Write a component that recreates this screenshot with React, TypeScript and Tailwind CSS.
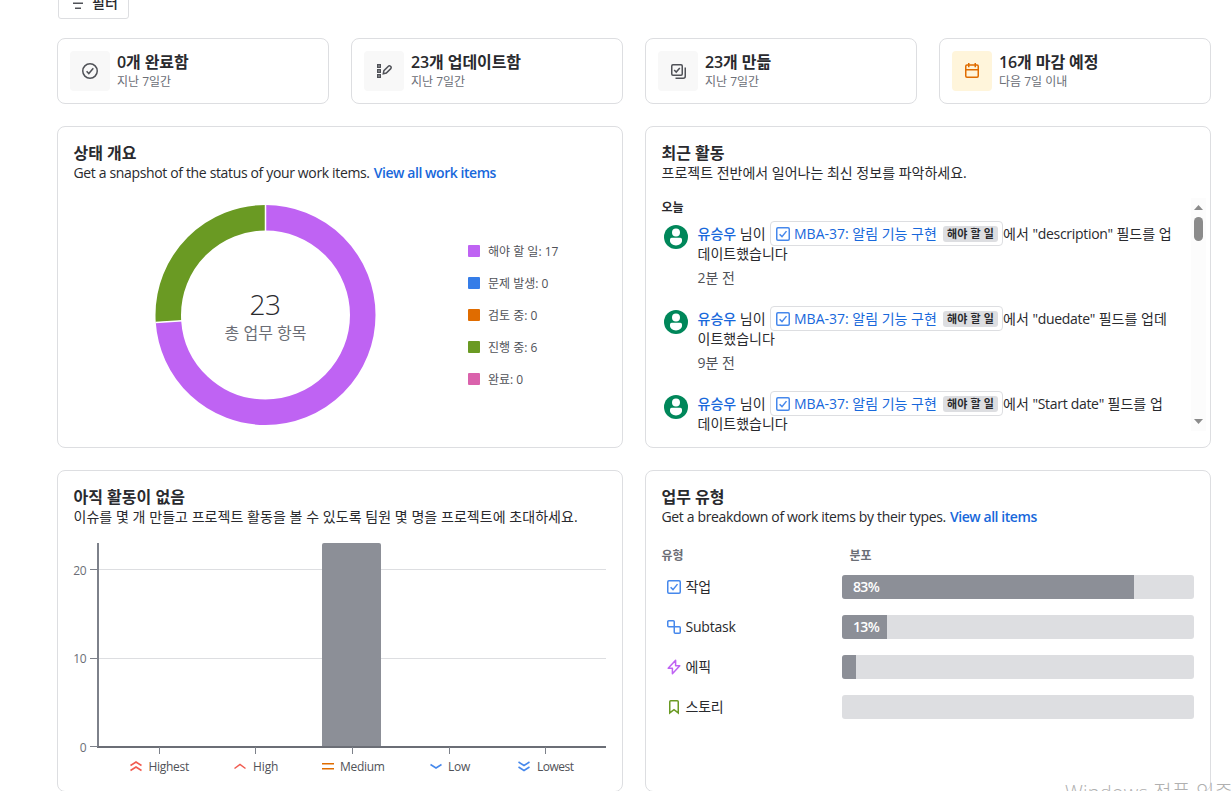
import type { ReactNode } from "react"
import clsx from "clsx"

interface StatCardProps {
  title: string
  caption: string
  icon: ReactNode
  highlight?: boolean
}

interface Activity {
  field: string
  before: string
  after: string
  time: string
}

interface WorkType {
  name: string
  percent: number
  icon: ReactNode
}

const TRACK_WIDTH = 352

const legend = [
  { label: "해야 할 일: 17", color: "bg-[#bf63f3]" },
  { label: "문제 발생: 0", color: "bg-[#357de8]" },
  { label: "검토 중: 0", color: "bg-[#e06c00]" },
  { label: "진행 중: 6", color: "bg-[#6a9a23]" },
  { label: "완료: 0", color: "bg-[#da62ac]" },
]

const activities: Activity[] = [
  { field: "description", before: "필드를 업", after: "데이트했습니다", time: "2분 전" },
  { field: "duedate", before: "필드를 업데", after: "이트했습니다", time: "9분 전" },
  { field: "Start date", before: "필드를 업", after: "데이트했습니다", time: "" },
]

const workTypes: WorkType[] = [
  { name: "작업", percent: 83, icon: <TaskIcon /> },
  { name: "Subtask", percent: 13, icon: <SubtaskIcon /> },
  { name: "에픽", percent: 4, icon: <EpicIcon /> },
  { name: "스토리", percent: 0, icon: <StoryIcon /> },
]

function TaskIcon() {
  return (
    <svg width="16" height="16" viewBox="0 0 16 16" fill="none" stroke="#4688ec" strokeWidth="1.5" className="shrink-0">
      <rect x="1.75" y="1.75" width="12.5" height="12.5" rx="1.2" />
      <path d="M4.6 8.2 7 10.6l4.5-5.5" />
    </svg>
  )
}

function SubtaskIcon() {
  return (
    <svg width="16" height="16" viewBox="0 0 16 16" fill="none" stroke="#4688ec" strokeWidth="1.5" className="shrink-0">
      <path d="M8.25 7.75v-5a1 1 0 0 0-1-1h-4.5a1 1 0 0 0-1 1v4a1 1 0 0 0 1 1h10.5a1 1 0 0 1 1 1v4.5a1 1 0 0 1-1 1h-4a1 1 0 0 1-1-1v-5.5" />
    </svg>
  )
}

function EpicIcon() {
  return (
    <svg width="16" height="16" viewBox="0 0 16 16" fill="none" stroke="#bf63f3" strokeWidth="1.5" strokeLinejoin="round" className="shrink-0">
      <path d="M9.6 1.2 2.2 9.2h4.2v5.6l7.400-8H9.6z" />
    </svg>
  )
}

function StoryIcon() {
  return (
    <svg width="16" height="16" viewBox="0 0 16 16" fill="none" stroke="#6a9a23" strokeWidth="1.5" className="shrink-0">
      <path d="M3.75 2.75a1 1 0 0 1 1-1h6.5a1 1 0 0 1 1 1v11.2L8 10.6l-4.25 3.35z" />
    </svg>
  )
}

function DoneIcon() {
  return (
    <svg width="16" height="16" viewBox="0 0 16 16" fill="none" stroke="#505258" strokeWidth="1.5">
      <circle cx="8" cy="8" r="7.25" />
      <path d="m4.6 8.3 2.2 2.3 4.5-5.3" />
    </svg>
  )
}

function UpdatedIcon() {
  return (
    <svg width="16" height="16" viewBox="0 0 16 16" fill="none" stroke="#505258" strokeWidth="1.5">
      <rect x="1.75" y="1.75" width="2.5" height="2.5" />
      <rect x="1.75" y="6.75" width="2.5" height="2.5" />
      <rect x="1.75" y="11.75" width="2.5" height="2.5" />
      <path d="M7.300 10.700l.6-3 4.500-4.500a1.400 1.400 0 0 1 2 0l.4.4a1.400 1.400 0 0 1 0 2L10.300 10.100z" />
    </svg>
  )
}

function CreatedIcon() {
  return (
    <svg width="16" height="16" viewBox="0 0 16 16" fill="none" stroke="#505258" strokeWidth="1.5">
      <rect x="1.75" y="1.75" width="10.5" height="10.5" rx="1.2" />
      <path d="m4.200 7 2 2.100 3.600-4.200" />
      <path d="M15.250 4.500v8.750a2 2 0 0 1-2 2H5.500" />
    </svg>
  )
}

function DueIcon() {
  return (
    <svg width="16" height="16" viewBox="0 0 16 16" fill="none" stroke="#e06c00" strokeWidth="1.5">
      <rect x="1.75" y="2" width="12.5" height="12.25" rx="1.2" />
      <path d="M1.75 6.75h12.5M4.75 0v4.2M11.25 0v4.2" />
    </svg>
  )
}

function StatCard({ title, caption, icon, highlight }: StatCardProps) {
  return (
    <div className="flex h-[66px] items-center rounded-lg border border-[#dddee1] px-3">
      <div className={clsx("flex size-10 items-center justify-center rounded", highlight ? "bg-[#fff5db]" : "bg-[#f8f8f8]")}>
        {icon}
      </div>
      <div className="ml-[7px] pt-px">
        <div className="text-base leading-5 font-semibold tracking-[-0.1px] whitespace-nowrap">{title}</div>
        <div className="text-xs leading-5 whitespace-nowrap text-[#6b6e76]">{caption}</div>
      </div>
    </div>
  )
}

function Panel({ title, description, link, children }: { title: string; description: ReactNode; link?: string; children: ReactNode }) {
  return (
    <section className="flex h-[322px] flex-col rounded-lg border border-[#dddee1] px-[15px] pt-4">
      <h2 className="pl-[0.5px] text-base leading-5 font-semibold">{title}</h2>
      <p className="pl-[0.5px] text-sm leading-5 whitespace-nowrap">
        {description}
        {link && <a className="ml-1 font-semibold tracking-[-0.44px] text-[#1868db]">{link}</a>}
      </p>
      {children}
    </section>
  )
}

function StatusChart() {
  return (
    <div className="flex">
      <svg width="221" height="220" viewBox="0 0 221 220" className="mt-[22px] ml-[82px]">
        <g transform="translate(0.5 0)">
          <g fill="none" strokeWidth="25.5" transform="rotate(-90 110 110)">
            <circle cx="110" cy="110" r="97.25" stroke="#bf63f3" pathLength="23" strokeDasharray="17 6" />
            <circle cx="110" cy="110" r="97.25" stroke="#6a9a23" pathLength="23" strokeDasharray="6 17" strokeDashoffset="-17" />
          </g>
          <path d="M110 0v27M0 117.500l27-1.800" stroke="#fff" strokeWidth="1.5" />
          <text x="109.500" y="110" textAnchor="middle" fontSize="28" fontWeight="300" fill="#292a2e" letterSpacing="-0.6">23</text>
          <text x="110" y="134" textAnchor="middle" fontSize="16" fill="#6b6e76">총 업무 항목</text>
        </g>
      </svg>
      <ul className="mt-[58px] ml-[92px]">
        {legend.map((item) => (
          <li key={item.label} className="flex h-8 items-start gap-2">
            <span className={clsx("mt-1 size-3 rounded-[1px]", item.color)} />
            <span className="mt-px text-xs leading-5 text-[#505258]">{item.label}</span>
          </li>
        ))}
      </ul>
    </div>
  )
}

function ActivityItem({ activity }: { activity: Activity }) {
  return (
    <div className="flex h-[85px] shrink-0">
      <svg width="24" height="24" viewBox="0 0 24 24" className="mt-[7px] ml-[3px] shrink-0">
        <circle cx="12" cy="12" r="12" fill="#00875a" />
        <circle cx="12" cy="7.5" r="4" fill="#fff" />
        <path d="M6 14.5A1.7 1.7 0 0 1 7.700 12.800h8.600a1.700 1.700 0 0 1 1.700 1.700v1.300c0 2.600-2.600 4.600-6 4.600s-6-2-6-4.600z" fill="#fff" />
      </svg>
      <div className="ml-[9px] text-sm leading-5 whitespace-nowrap">
        <div className="mt-1.5 flex h-5 items-center">
          <span className="w-[73px] pl-[0.5px]">
            <span className="font-medium text-[#1868db]">유승우</span> 님이
          </span>
          <span className="-mt-px flex h-[25px] w-[233px] items-center rounded border border-[#dddee1] pl-1 text-[#1868db]">
            <TaskIcon />
            <span className="ml-[3px] w-[149px]">MBA-37: 알림 기능 구현</span>
            <span className="flex h-4 w-[55px] items-center justify-center rounded-[3px] bg-[#dddee1] text-[11px] font-bold tracking-[0.1px] text-[#292a2e]">
              해야 할 일
            </span>
          </span>
          <span>
            에서 <span className="tracking-[-0.3px]">"{activity.field}"</span> {activity.before}
          </span>
        </div>
        <div className="pl-[0.5px]">{activity.after}</div>
        {activity.time && <div className="mt-1 pl-[0.5px] text-[#505258]">{activity.time}</div>}
      </div>
    </div>
  )
}

function ActivityFeed() {
  return (
    <div className="mt-[15px] -mr-[11px] flex h-[233px]">
      <div className="flex flex-1 flex-col overflow-hidden">
        <div className="h-5 shrink-0 pl-[0.5px] text-xs leading-5 font-semibold">오늘</div>
        {activities.map((activity) => (
          <ActivityItem key={activity.field} activity={activity} />
        ))}
      </div>
      <div className="flex w-[15px] flex-col items-center bg-[#fcfcfc] pt-[7px] pb-[7px]">
        <svg width="9" height="5" viewBox="0 0 9 5"><path d="M0 5 4.5 0 9 5z" fill="#8b8b8b" /></svg>
        <div className="mt-[7px] h-6 w-[9px] rounded-full bg-[#8b8b8b]" />
        <svg width="9" height="5" viewBox="0 0 9 5" className="mt-auto"><path d="M0 0 4.5 5 9 0z" fill="#8b8b8b" /></svg>
      </div>
    </div>
  )
}

function PriorityChart() {
  return (
    <svg width="534" height="250" viewBox="0 0 534 250" className="mt-3.5" fontSize="12">
      <path d="M25 28.5h508M25 117.5h508" stroke="#dddee1" />
      <path d="M249 206V4a2 2 0 0 1 2-2h55a2 2 0 0 1 2 2v202z" fill="#8c8f97" />
      <path d="M25 2v204" stroke="#7d818a" strokeWidth="2" />
      <path d="M24 206h509" stroke="#6b6e76" strokeWidth="2" />
      <path d="M17 28.5h8M17 117.5h8M17 205.5h8M86.5 206v7M182.5 206v7M279.5 206v7M376.5 206v7M472.5 206v7" stroke="#7d818a" />
      <g fill="#6b6e76" textAnchor="end" letterSpacing="-0.2">
        <text x="13.5" y="34">20</text>
        <text x="13.5" y="122">10</text>
        <text x="13.5" y="211">0</text>
      </g>
      <g fill="none" strokeWidth="1.5">
        <path d="m57.5 224.5 5.5-3.5 5.5 3.5M57.5 229.5 63 226l5.5 3.5" stroke="#f15b50" />
        <path d="m161.5 227.5 5.5-4 5.5 4" stroke="#f15b50" />
        <path d="M249 222.75h12M249 227.75h12" stroke="#e06c00" />
        <path d="m357.5 223.5 5.5 3.5 5.5-3.5" stroke="#4688ec" />
        <path d="m445.5 221 5.5 3.5 5.5-3.5M445.5 226l5.5 3.5 5.5-3.5" stroke="#4688ec" />
      </g>
      <g fill="#505258" letterSpacing="-0.3">
        <text x="75.5" y="230">Highest</text>
        <text x="180" y="230" letterSpacing="-0.1">High</text>
        <text x="267" y="230">Medium</text>
        <text x="375" y="230">Low</text>
        <text x="464" y="230" letterSpacing="-0.5">Lowest</text>
      </g>
    </svg>
  )
}

function WorkTypes() {
  return (
    <div className="mt-[19px]">
      <div className="flex h-5 pl-[0.5px] text-xs leading-5 font-semibold text-[#6b6e76]">
        <span className="w-[188px]">유형</span>
        <span>분포</span>
      </div>
      <div className="mt-[9px] space-y-4">
        {workTypes.map((type) => (
          <div key={type.name} className="flex h-6 items-center">
            <div className="flex w-[181px] items-center gap-[3px] pl-[5px] text-sm">
              {type.icon}
              <span className="pl-[0.5px] tracking-[-0.2px]">{type.name}</span>
            </div>
            <div className="h-6 w-[352px] overflow-hidden rounded-[3px] bg-[#dddee1]">
              <div
                className="flex h-6 items-center bg-[#8c8f97] text-sm font-semibold text-white"
                style={{ width: Math.floor((TRACK_WIDTH * type.percent) / 100) }}
              >
                {type.percent > 10 && <span className="ml-[11px] tracking-[-0.7px]">{type.percent}%</span>}
              </div>
            </div>
          </div>
        ))}
      </div>
    </div>
  )
}

export default function App() {
  return (
    <div className="relative h-[791px] w-[1231px] overflow-hidden bg-white pr-5 pl-[57px] font-['Open_Sans','Noto_Sans_CJK_KR',sans-serif] text-[#292a2e]">
      <button className="-mt-[13px] ml-px flex h-8 w-[71px] items-center rounded-[3px] border border-[#dddee1] pl-3 text-sm font-medium">
        <svg width="16" height="16" viewBox="0 0 16 16" stroke="#505258" strokeWidth="1.5">
          <path d="M0 3.25h14M2 8.250h10M4 13.250h6" />
        </svg>
        <span className="ml-[5px]">필터</span>
      </button>

      <div className="mt-[19px] grid grid-cols-4 gap-[22px]">
        <StatCard title="0개 완료함" caption="지난 7일간" icon={<DoneIcon />} />
        <StatCard title="23개 업데이트함" caption="지난 7일간" icon={<UpdatedIcon />} />
        <StatCard title="23개 만듦" caption="지난 7일간" icon={<CreatedIcon />} />
        <StatCard title="16개 마감 예정" caption="다음 7일 이내" icon={<DueIcon />} highlight />
      </div>

      <div className="mt-[22px] grid grid-cols-2 gap-[22px]">
        <Panel
          title="상태 개요"
          description={<span className="tracking-[-0.35px]">Get a snapshot of the status of your work items.</span>}
          link="View all work items"
        >
          <StatusChart />
        </Panel>
        <Panel title="최근 활동" description="프로젝트 전반에서 일어나는 최신 정보를 파악하세요.">
          <ActivityFeed />
        </Panel>
        <Panel
          title="아직 활동이 없음"
          description={
            <span className="tracking-[0.05px]">이슈를 몇 개 만들고 프로젝트 활동을 볼 수 있도록 팀원 몇 명을 프로젝트에 초대하세요.</span>
          }
        >
          <PriorityChart />
        </Panel>
        <Panel
          title="업무 유형"
          description={<span className="tracking-[-0.35px]">Get a breakdown of work items by their types.</span>}
          link="View all items"
        >
          <WorkTypes />
        </Panel>
      </div>

      <div className="absolute top-[779px] left-[1065px] text-xl leading-7 font-light tracking-[0.2px] whitespace-nowrap text-[#b0b0b0]">
        Windows 정품 인증
      </div>
    </div>
  )
}
